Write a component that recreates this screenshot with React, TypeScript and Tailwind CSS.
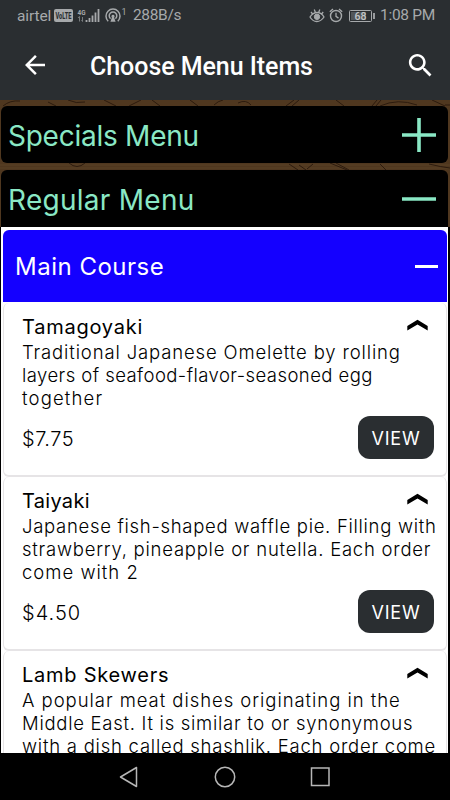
import { ReactNode } from 'react';

interface Line {
  text: string;
  tracking: string;
}

interface MenuItem {
  name: Line;
  lines: Line[];
  price?: Line;
}

const items: MenuItem[] = [
  {
    name: { text: 'Tamagoyaki', tracking: 'tracking-[0.75px]' },
    lines: [
      { text: 'Traditional Japanese Omelette by rolling', tracking: 'tracking-[0.86px]' },
      { text: 'layers of seafood-flavor-seasoned egg', tracking: 'tracking-[0.44px]' },
      { text: 'together', tracking: 'tracking-[1.15px]' },
    ],
    price: { text: '$7.75', tracking: 'tracking-[0.5px]' },
  },
  {
    name: { text: 'Taiyaki', tracking: 'tracking-[0.3px]' },
    lines: [
      { text: 'Japanese fish-shaped waffle pie. Filling with', tracking: 'tracking-[0.7px]' },
      { text: 'strawberry, pineapple or nutella. Each order', tracking: 'tracking-[0.76px]' },
      { text: 'come with 2', tracking: 'tracking-[1px]' },
    ],
    price: { text: '$4.50', tracking: 'tracking-[1px]' },
  },
  {
    name: { text: 'Lamb Skewers', tracking: 'tracking-[0.75px]' },
    lines: [
      { text: 'A popular meat dishes originating in the', tracking: 'tracking-[0.95px]' },
      { text: 'Middle East. It is similar to or synonymous', tracking: 'tracking-[0.72px]' },
      { text: 'with a dish called shashlik. Each order come', tracking: 'tracking-[0.76px]' },
    ],
  },
];

function StatusBar() {
  return (
    <div className="flex h-8 items-center pl-[17px] pr-[15px] text-[#a6a9ab]">
      <span className="w-[35px] whitespace-nowrap text-[15.5px] leading-8 tracking-[-0.1px]">airtel</span>
      <svg className="ml-0.5" width="74" height="20" viewBox="0 0 74 20" fill="none">
        <rect x="0" y="3" width="19" height="13" rx="2" fill="#a6a9ab" />
        <text x="1.5" y="13.2" fontSize="9" fontWeight="800" textLength="16" lengthAdjust="spacingAndGlyphs" fill="#2a2e31">VoLTE</text>
        <text x="23.5" y="8.5" fontSize="8" fontWeight="700" textLength="8" lengthAdjust="spacingAndGlyphs" fill="#a6a9ab">4G</text>
        <path d="M25.5 15.5v-5m-1.5 1.5 1.5-1.7M28.5 11v4.5m-1-1.4 1 1.4" stroke="#777b7d" />
        <path d="M32.5 16v-2M35.5 16v-4M38.5 16V9.5M41.5 16V6.5M44.5 16V3" stroke="#a6a9ab" strokeWidth="1.8" />
        <path d="M54.2 15.2a7 7 0 1 1 9.6 0M56.6 12.7a3.8 3.8 0 1 1 4.8 0" stroke="#a6a9ab" strokeWidth="1.5" />
        <path d="M59 8.8a1.5 1.5 0 0 1 1.1 2.6l1.5 4.4h-5.2l1.5-4.4a1.5 1.5 0 0 1 1.1-2.6Z" fill="#a6a9ab" />
        <text x="67.5" y="9" fontSize="9" fill="#a6a9ab">1</text>
      </svg>
      <span className="ml-[5px] text-[15.5px] tracking-[-0.35px]">288B/s</span>
      <svg className="ml-auto" width="67" height="20" viewBox="0 0 67 20" fill="none" stroke="#a6a9ab">
        <path d="M1 11c4-6 10.5-6 14 0-4 6-10.5 6-14 0ZM2 6l2 2.5M5.3 3.5 6.4 6.5M10.8 3.5 9.7 6.5M14.2 6l-2 2.5" strokeWidth="1.3" />
        <circle cx="8" cy="10.8" r="2.7" fill="#a6a9ab" />
        <circle cx="27" cy="10" r="5.5" strokeWidth="1.4" />
        <path d="M27 6.8V10.3l2.5 1.8M20.8 5.8l3.2-2.9M33.2 5.8 30 2.9" strokeWidth="1.3" />
        <rect x="40.5" y="4.5" width="22" height="11" rx="1" />
        <rect x="42" y="6" width="15" height="8" fill="#515659" stroke="none" />
        <path d="M65 7v6" strokeWidth="1.8" />
        <text x="45.5" y="13.7" fontSize="10.5" fontWeight="500" textLength="12" fill="#c3c6c8" stroke="none">68</text>
      </svg>
      <span className="ml-[4px] whitespace-nowrap text-[15.5px] tracking-[-0.3px]">1:08 PM</span>
    </div>
  );
}

function AppBar() {
  return (
    <div className="flex h-[68px] items-center pl-[20px] pr-[14px] text-white">
      <svg className="mb-0.5" width="30" height="30" viewBox="0 0 24 24" fill="currentColor">
        <path d="M20 11H7.83l5.59-5.59L12 4l-8 8 8 8 1.41-1.41L7.83 13H20v-2z" />
      </svg>
      <h1 className="ml-[40px] mt-px text-[25px] font-medium tracking-[-0.05px]">Choose Menu Items</h1>
      <svg className="mb-0.5 ml-auto" width="31" height="31" viewBox="0 0 24 24" fill="currentColor">
        <path d="M15.5 14h-.79l-.28-.27C15.41 12.59 16 11.11 16 9.5 16 5.91 13.09 3 9.5 3S3 5.91 3 9.5 5.91 16 9.5 16c1.61 0 3.09-.59 4.23-1.57l.27.28v.79l5 4.99L20.49 19l-4.99-5zm-6 0C7.01 14 5 11.99 5 9.5S7.01 5 9.5 5 14 7.01 14 9.5 11.99 14 9.5 14z" />
      </svg>
    </div>
  );
}

function MenuHeader({ children, className, open }: { children: ReactNode; className: string; open?: boolean }) {
  return (
    <div className={`flex h-[57px] shrink-0 items-center justify-between bg-black pl-[7px] pr-[12px] text-[#8ae8c5] ${className}`}>
      {children}
      <svg width="34" height="34" viewBox="0 0 34 34" stroke="currentColor" strokeWidth="3.6">
        <path d={open ? 'M0 17h34' : 'M0 17h34M17 0v34'} />
      </svg>
    </div>
  );
}

function ItemCard({ item }: { item: MenuItem }) {
  return (
    <div className="h-[174px] shrink-0 overflow-hidden rounded-md border-x border-b-2 border-[#e6e4e6] bg-white pl-[18px] pr-[12px] pt-[11px] text-black">
      <div className="flex h-[27px] items-start justify-between">
        <span className={`text-[20px] font-[430] leading-[26px] ${item.name.tracking}`}>{item.name.text}</span>
        <svg className="mr-[6px] mt-[4px]" width="21" height="13" viewBox="0 0 21 13">
          <path d="M.3 8 10.5 1.8 20.7 8v4.6L10.5 6.6.3 12.6Z" />
        </svg>
      </div>
      {item.lines.map((line) => (
        <div key={line.text} className="h-[23px] whitespace-nowrap text-[18.5px] font-light leading-[23px]">
          <span className={line.tracking}>{line.text}</span>
        </div>
      ))}
      {item.price && (
        <div className="mt-[6px] flex items-center justify-between">
          <span className={`mt-0.5 text-[20px] font-light ${item.price.tracking}`}>{item.price.text}</span>
          <button className="h-[43px] w-[76px] rounded-[12px] bg-[#2a2e31] pt-0.5 text-[18px] tracking-[0.8px] text-white">VIEW</button>
        </div>
      )}
    </div>
  );
}

function WoodGrain() {
  return (
    <svg className="absolute inset-0" width="450" height="127" viewBox="0 0 450 127" fill="none" stroke="#2c1b0e">
      <rect width="450" height="127" fill="#4f371f" stroke="none" />
      <path d="M0 65h450M0 68h450" stroke="#5a4227" />
      <path d="M3 6Q10 0 20 1M48 2l8 4M68 0q8 4 17 2M104 0l12 6M129 6l12-6M152 0l8 6M190 0l8 6M214 5q4-4 9-5M238 3q8-4 13 2M286 6l8-6M299 0l-7 6M336 0l8 6M372 6l5-6M376 6l5-6M380 6q18-8 37-1M432 0l13 6M445 5h5" />
      <path d="M69 63q8 7 16 0M289 64l9 6M299 65l7 5M307 69l6-5M330 63l17 7M336 63l13 7M380 64l6 6M429 64q12 3 21 4" />
    </svg>
  );
}

export default function App() {
  return (
    <div className="flex h-[800px] w-[450px] flex-col overflow-hidden bg-black font-[Roboto,sans-serif]">
      <header className="h-[100px] shrink-0 bg-[#2a2e31]">
        <StatusBar />
        <AppBar />
      </header>
      <main className="relative flex h-[653px] shrink-0 flex-col overflow-hidden pl-px pr-[2px] pt-[6px] font-[Inter,sans-serif]">
        <WoodGrain />
        <div className="relative flex flex-col">
          <MenuHeader className="rounded-md">
            <span className="mt-[3px] text-[28px] tracking-[-0.25px]">Specials Menu</span>
          </MenuHeader>
          <MenuHeader open className="mt-[7px] rounded-t-md">
            <span className="mt-[3px] text-[28px] tracking-[0.27px]">Regular Menu</span>
          </MenuHeader>
          <section className="bg-white pl-[2px] pr-px pt-[3px]">
            <div className="mb-px flex h-[72px] items-center justify-between rounded-t-md bg-[#1400ff] pl-[12px] pr-[9px] text-white">
              <span className="mt-0.5 text-[24px] tracking-[0.5px]">Main Course</span>
              <span className="h-[3px] w-[23px] bg-white" />
            </div>
            {items.map((item) => (
              <ItemCard key={item.name.text} item={item} />
            ))}
          </section>
        </div>
      </main>
      <nav className="flex h-[47px] shrink-0 items-center justify-center bg-black">
        <svg width="212" height="24" viewBox="0 0 212 24" fill="none" stroke="#b7b7b7" strokeWidth="1.5">
          <path d="M1.5 12 17.5 2.5v19Z" strokeLinejoin="round" />
          <circle cx="106" cy="12" r="9.7" />
          <rect x="192.5" y="3" width="17.5" height="17.5" />
        </svg>
      </nav>
    </div>
  );
}
